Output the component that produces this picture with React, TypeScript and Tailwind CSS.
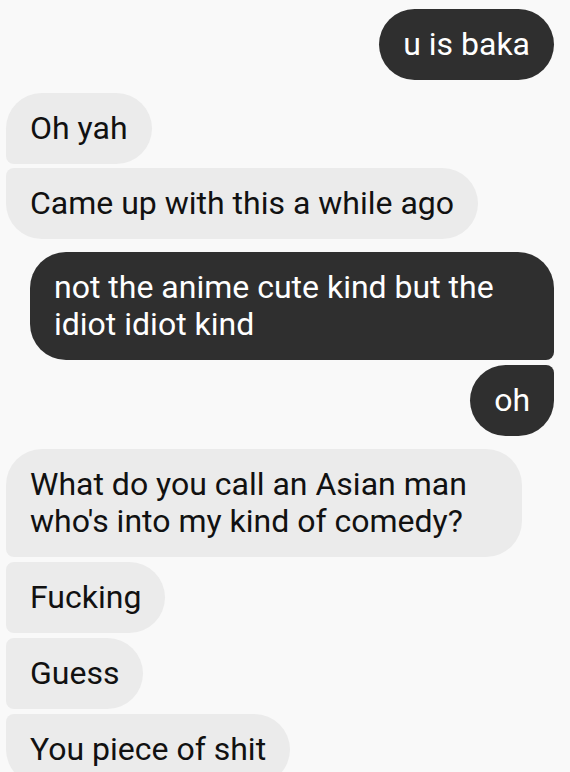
type Msg = {
  text: string;
  mine: boolean;
  corners: string;
  gap: string;
};

const messages: Msg[] = [
  { text: "u is baka", mine: true, corners: "rounded-[36px]", gap: "mt-0" },
  { text: "Oh yah", mine: false, corners: "rounded-[36px] rounded-bl-[8px]", gap: "mt-[13px]" },
  { text: "Came up with this a while ago", mine: false, corners: "rounded-[36px] rounded-tl-[8px]", gap: "mt-[4px]" },
  { text: "not the anime cute kind but the idiot idiot kind", mine: true, corners: "rounded-[36px] rounded-br-[8px]", gap: "mt-[13px]" },
  { text: "oh", mine: true, corners: "rounded-[36px] rounded-tr-[8px]", gap: "mt-[5px]" },
  { text: "What do you call an Asian man who's into my kind of comedy?", mine: false, corners: "rounded-[36px] rounded-bl-[8px]", gap: "mt-[13px]" },
  { text: "Fucking", mine: false, corners: "rounded-[36px] rounded-l-[8px]", gap: "mt-[5px]" },
  { text: "Guess", mine: false, corners: "rounded-[36px] rounded-l-[8px]", gap: "mt-[5px]" },
  { text: "You piece of shit", mine: false, corners: "rounded-[36px] rounded-tl-[8px]", gap: "mt-[5px]" },
];

function Bubble({ msg }: { msg: Msg }) {
  return (
    <div className={`flex ${msg.mine ? "justify-end" : "justify-start"} ${msg.gap}`}>
      <div
        className={`px-6 py-[17px] text-[32px] leading-[37px] ${msg.corners} ${
          msg.mine
            ? "max-w-[524px] bg-[#2f2f2f] text-white"
            : "max-w-[516px] bg-[#ebebeb] text-[#111111]"
        }`}
      >
        {msg.text}
      </div>
    </div>
  );
}

export default function App() {
  return (
    <div
      className="w-[570px] h-[772px] overflow-hidden bg-[#f9f9f9] pt-[9px] pl-[6px] pr-[16px]"
      style={{ fontFamily: "Roboto, 'Liberation Sans', sans-serif" }}
    >
      <div className="flex flex-col">
        {messages.map((m, i) => (
          <Bubble key={i} msg={m} />
        ))}
      </div>
    </div>
  );
}
